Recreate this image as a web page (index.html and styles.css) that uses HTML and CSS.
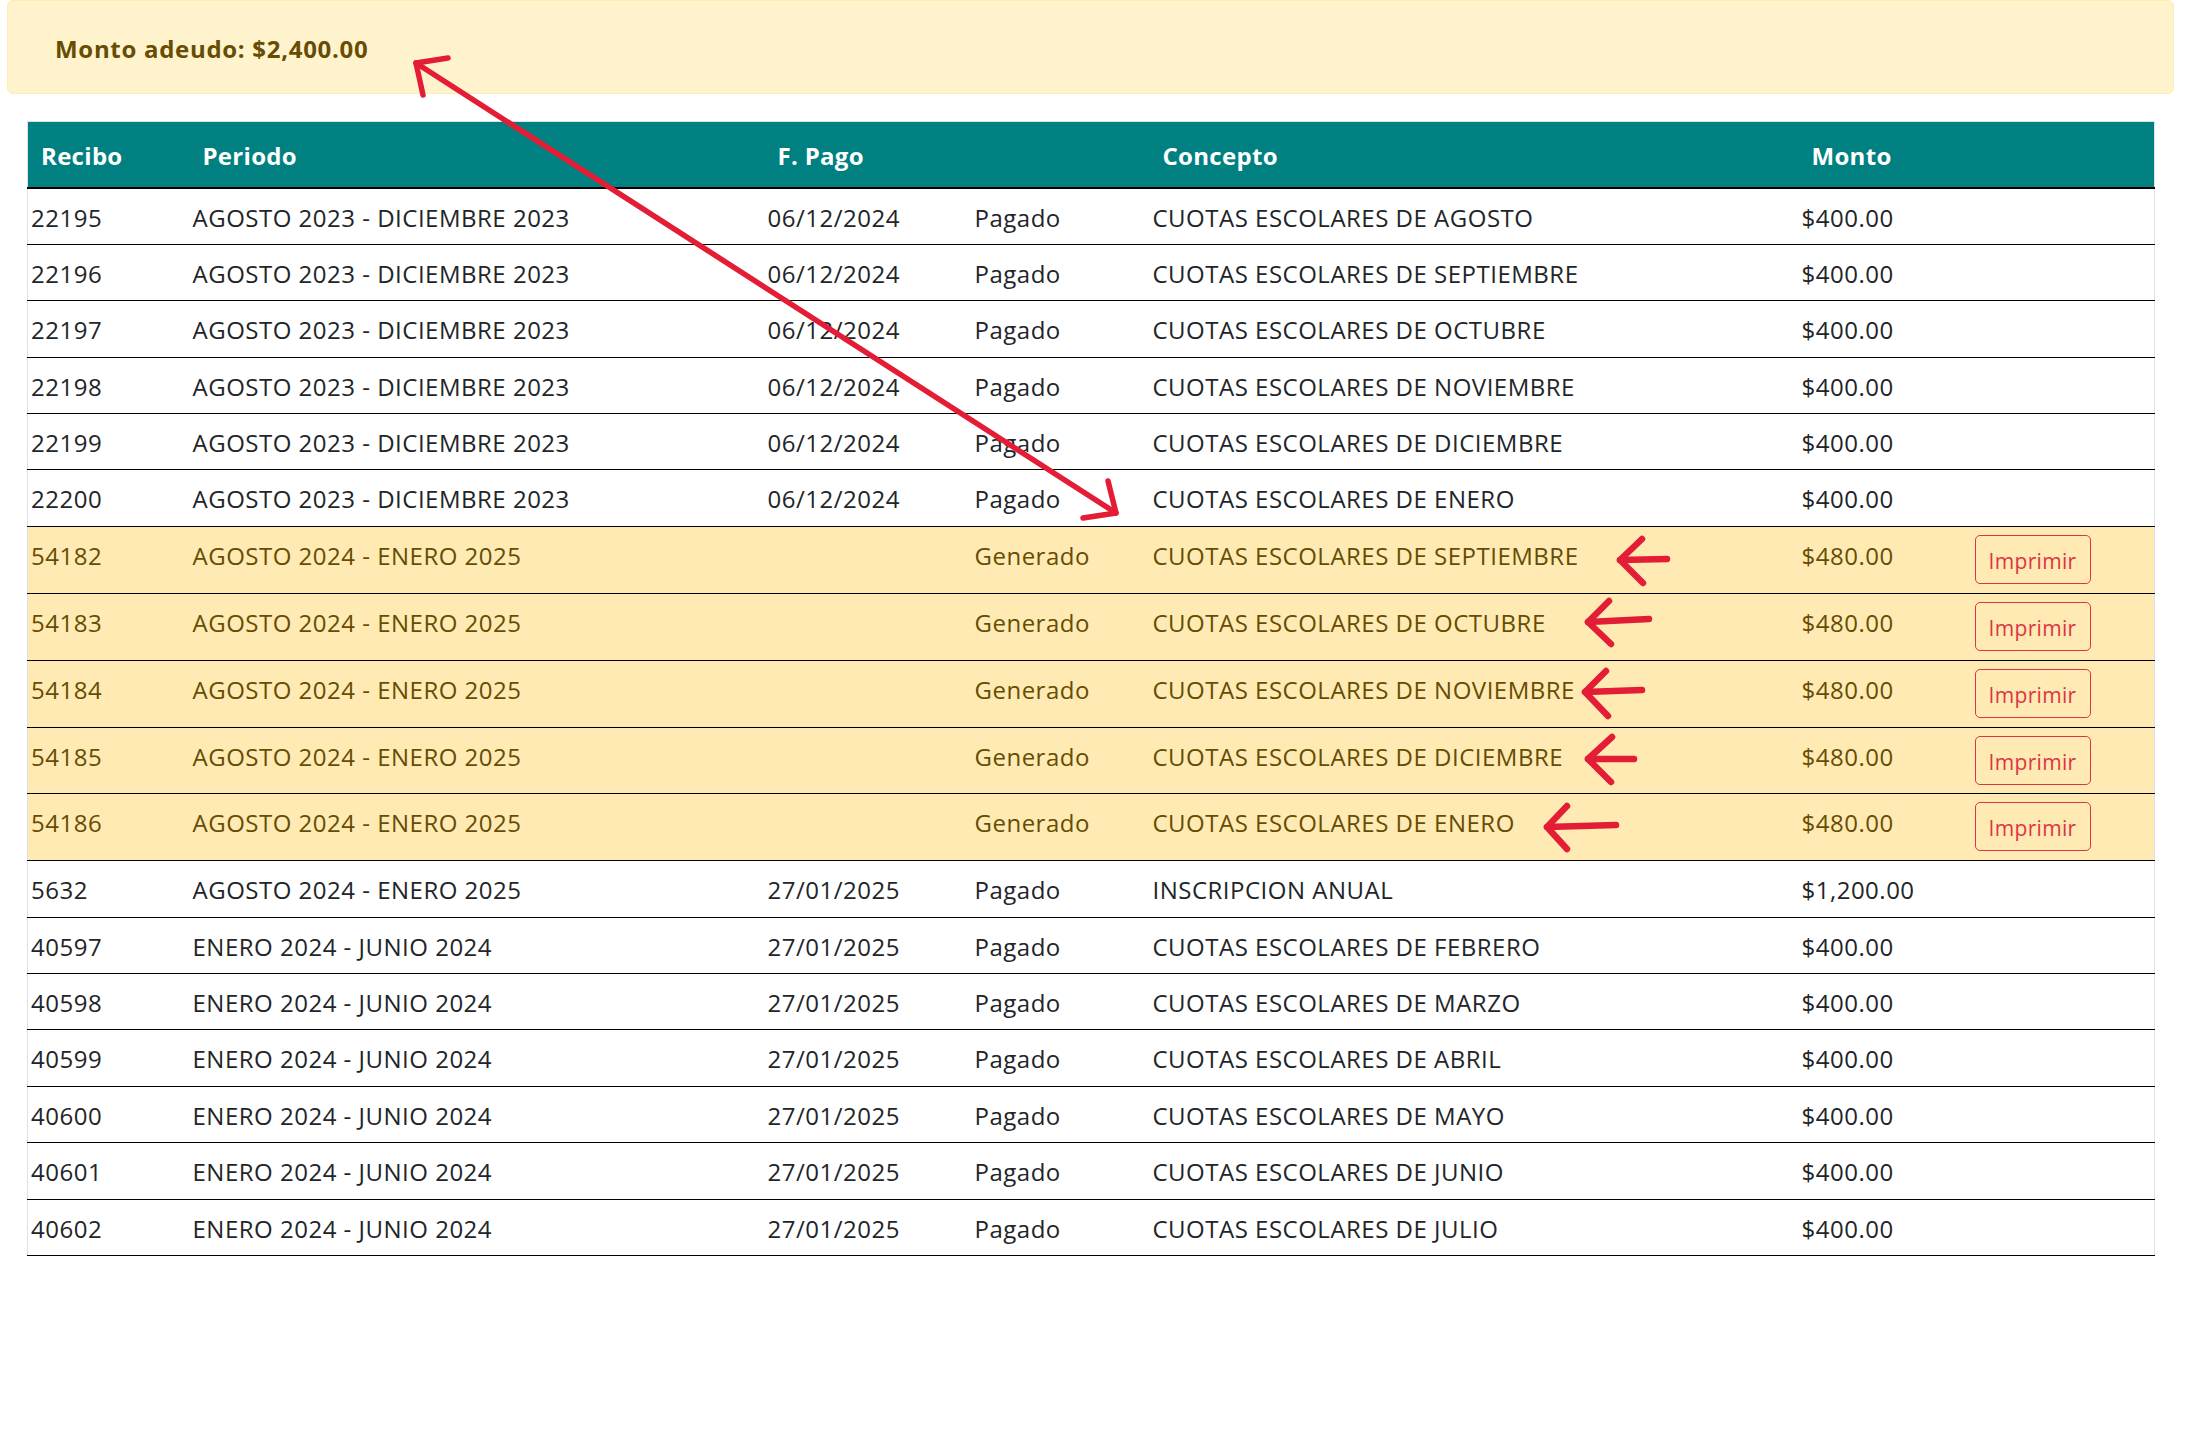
FILE: index.html
```html
<!DOCTYPE html>
<html lang="es">
<head>
<meta charset="utf-8">
<title>Pagos</title>
<link rel="stylesheet" href="styles.css">
</head>
<body>
<div class="page">
  <div class="alert"><strong>Monto adeudo: $2,400.00</strong></div>
  <div class="table-wrap">
    <table class="pagos">
      <colgroup>
        <col class="c-recibo"><col class="c-periodo"><col class="c-fecha"><col class="c-estado"><col class="c-concepto"><col class="c-monto"><col class="c-accion">
      </colgroup>
      <thead>
        <tr><th>Recibo</th><th>Periodo</th><th>F. Pago</th><th></th><th>Concepto</th><th>Monto</th><th></th></tr>
      </thead>
      <tbody>
        <tr><td>22195</td><td>AGOSTO 2023 - DICIEMBRE 2023</td><td>06/12/2024</td><td>Pagado</td><td>CUOTAS ESCOLARES DE AGOSTO</td><td>$400.00</td><td></td></tr>
        <tr><td>22196</td><td>AGOSTO 2023 - DICIEMBRE 2023</td><td>06/12/2024</td><td>Pagado</td><td>CUOTAS ESCOLARES DE SEPTIEMBRE</td><td>$400.00</td><td></td></tr>
        <tr><td>22197</td><td>AGOSTO 2023 - DICIEMBRE 2023</td><td>06/12/2024</td><td>Pagado</td><td>CUOTAS ESCOLARES DE OCTUBRE</td><td>$400.00</td><td></td></tr>
        <tr><td>22198</td><td>AGOSTO 2023 - DICIEMBRE 2023</td><td>06/12/2024</td><td>Pagado</td><td>CUOTAS ESCOLARES DE NOVIEMBRE</td><td>$400.00</td><td></td></tr>
        <tr><td>22199</td><td>AGOSTO 2023 - DICIEMBRE 2023</td><td>06/12/2024</td><td>Pagado</td><td>CUOTAS ESCOLARES DE DICIEMBRE</td><td>$400.00</td><td></td></tr>
        <tr><td>22200</td><td>AGOSTO 2023 - DICIEMBRE 2023</td><td>06/12/2024</td><td>Pagado</td><td>CUOTAS ESCOLARES DE ENERO</td><td>$400.00</td><td></td></tr>
        <tr class="gen"><td>54182</td><td>AGOSTO 2024 - ENERO 2025</td><td></td><td>Generado</td><td>CUOTAS ESCOLARES DE SEPTIEMBRE</td><td>$480.00</td><td class="act"><button class="btn-print" type="button">Imprimir</button></td></tr>
        <tr class="gen"><td>54183</td><td>AGOSTO 2024 - ENERO 2025</td><td></td><td>Generado</td><td>CUOTAS ESCOLARES DE OCTUBRE</td><td>$480.00</td><td class="act"><button class="btn-print" type="button">Imprimir</button></td></tr>
        <tr class="gen"><td>54184</td><td>AGOSTO 2024 - ENERO 2025</td><td></td><td>Generado</td><td>CUOTAS ESCOLARES DE NOVIEMBRE</td><td>$480.00</td><td class="act"><button class="btn-print" type="button">Imprimir</button></td></tr>
        <tr class="gen"><td>54185</td><td>AGOSTO 2024 - ENERO 2025</td><td></td><td>Generado</td><td>CUOTAS ESCOLARES DE DICIEMBRE</td><td>$480.00</td><td class="act"><button class="btn-print" type="button">Imprimir</button></td></tr>
        <tr class="gen"><td>54186</td><td>AGOSTO 2024 - ENERO 2025</td><td></td><td>Generado</td><td>CUOTAS ESCOLARES DE ENERO</td><td>$480.00</td><td class="act"><button class="btn-print" type="button">Imprimir</button></td></tr>
        <tr><td>5632</td><td>AGOSTO 2024 - ENERO 2025</td><td>27/01/2025</td><td>Pagado</td><td>INSCRIPCION ANUAL</td><td>$1,200.00</td><td></td></tr>
        <tr><td>40597</td><td>ENERO 2024 - JUNIO 2024</td><td>27/01/2025</td><td>Pagado</td><td>CUOTAS ESCOLARES DE FEBRERO</td><td>$400.00</td><td></td></tr>
        <tr><td>40598</td><td>ENERO 2024 - JUNIO 2024</td><td>27/01/2025</td><td>Pagado</td><td>CUOTAS ESCOLARES DE MARZO</td><td>$400.00</td><td></td></tr>
        <tr><td>40599</td><td>ENERO 2024 - JUNIO 2024</td><td>27/01/2025</td><td>Pagado</td><td>CUOTAS ESCOLARES DE ABRIL</td><td>$400.00</td><td></td></tr>
        <tr><td>40600</td><td>ENERO 2024 - JUNIO 2024</td><td>27/01/2025</td><td>Pagado</td><td>CUOTAS ESCOLARES DE MAYO</td><td>$400.00</td><td></td></tr>
        <tr><td>40601</td><td>ENERO 2024 - JUNIO 2024</td><td>27/01/2025</td><td>Pagado</td><td>CUOTAS ESCOLARES DE JUNIO</td><td>$400.00</td><td></td></tr>
        <tr><td>40602</td><td>ENERO 2024 - JUNIO 2024</td><td>27/01/2025</td><td>Pagado</td><td>CUOTAS ESCOLARES DE JULIO</td><td>$400.00</td><td></td></tr>
      </tbody>
    </table>
  </div>
</div>
<svg class="annotations" width="2202" height="1429" viewBox="0 0 2202 1429" aria-hidden="true">
  <g fill="none" stroke="#e21d35" stroke-linecap="round" stroke-linejoin="round">
    <g stroke-width="5.5">
      <line x1="416" y1="63" x2="1116" y2="513"/>
      <polyline points="448,58 416,63 423,95"/>
      <polyline points="1083,518 1116,513 1108,481"/>
    </g>
    <g stroke-width="6.5">
      <line x1="1620" y1="560" x2="1667" y2="559"/>
      <polyline points="1642,539 1620,560 1643,583"/>
      <line x1="1588" y1="622" x2="1649" y2="619"/>
      <polyline points="1609,601 1588,622 1611,644"/>
      <line x1="1585" y1="692" x2="1642" y2="690"/>
      <polyline points="1606,671 1585,692 1608,716"/>
      <line x1="1588" y1="759" x2="1634" y2="759"/>
      <polyline points="1612,737 1588,759 1611,782"/>
      <line x1="1547" y1="827" x2="1616" y2="825"/>
      <polyline points="1567,806 1547,827 1567,849"/>
    </g>
  </g>
</svg>
</body>
</html>
```

FILE: styles.css
```css
* { box-sizing: border-box; }

html, body {
  margin: 0;
  padding: 0;
  background: #fff;
}

body {
  position: relative;
  width: 2202px;
  min-height: 1429px;
  font-family: "Open Sans", "Noto Sans", "DejaVu Sans", sans-serif;
  font-size: 24px;
  color: #212529;
}

.page {
  padding: 0 28px 0 7px;
}

.alert {
  display: flex;
  align-items: center;
  height: 94px;
  padding: 3px 0 0 47px;
  background: #fff3cd;
  border: 1px solid #ffecb5;
  border-radius: 6px;
  color: #664d03;
  font-size: 24px;
}

.alert strong {
  font-weight: 700;
  letter-spacing: 0.7px;
}

.table-wrap {
  margin: 27px 20px 0 20px;
}

.pagos {
  width: 100%;
  table-layout: fixed;
  border-collapse: collapse;
  border: 1px solid #dee2e6;
}

.c-recibo { width: 162px; }
.c-periodo { width: 575px; }
.c-fecha { width: 207px; }
.c-estado { width: 178px; }
.c-concepto { width: 649px; }
.c-monto { width: 171px; }
.c-accion { width: 185px; }

.pagos th {
  height: 66px;
  padding: 2px 13px 0;
  background: #008080;
  color: #fff;
  font-weight: 700;
  text-align: left;
  vertical-align: middle;
  letter-spacing: 0.3px;
  border-bottom: 2px solid #000;
  white-space: nowrap;
}

.pagos td {
  padding: 11px 3px 8.4px;
  line-height: 36px;
  vertical-align: top;
  letter-spacing: 0.5px;
  white-space: nowrap;
  border-bottom: 1px solid #000;
}

.pagos tr.gen td {
  background: #ffeab4;
  color: #664d03;
}

.pagos td.act {
  padding: 8px 3px 8.9px 5px;
}

.btn-print {
  display: flex;
  align-items: center;
  justify-content: center;
  width: 116px;
  height: 49px;
  padding: 4px 0 0;
  margin: 0;
  background: transparent;
  border: 1px solid #dc3545;
  border-radius: 5px;
  color: #dc3545;
  font-family: inherit;
  font-size: 21px;
  letter-spacing: 0.3px;
  line-height: 1;
  cursor: pointer;
}

.annotations {
  position: absolute;
  top: 0;
  left: 0;
  pointer-events: none;
}
```
